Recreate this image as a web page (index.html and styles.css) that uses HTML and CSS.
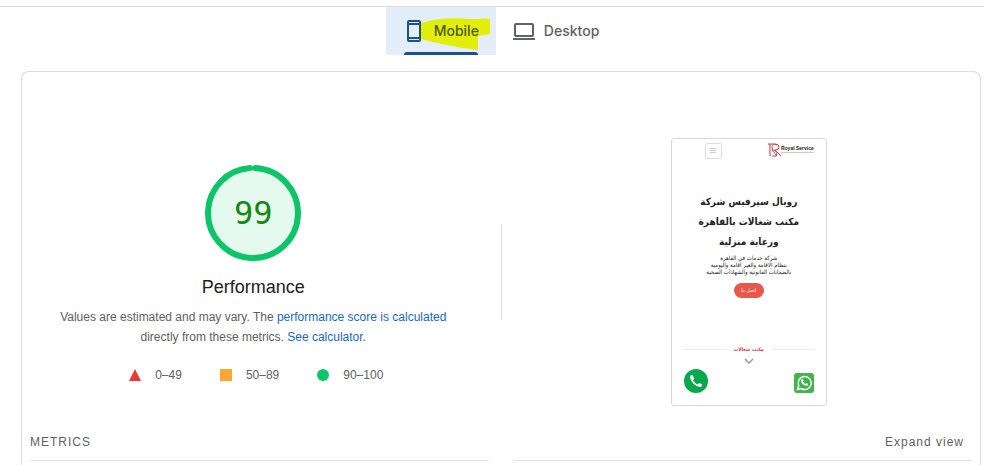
FILE: index.html
```html
<!DOCTYPE html>
<html lang="en">
<head>
    <meta charset="UTF-8">
    <meta name="viewport" content="width=device-width, initial-scale=1.0">
    <title>PageSpeed Insights</title>
    <link rel="stylesheet" href="styles.css">
</head>
<body>
    <nav class="tabs">
        <button type="button" class="tab active">
            <svg class="marker" viewBox="0 0 70 34" aria-hidden="true">
                <path d="M0 6 L12 3 Q30 0 48 2 L56 2 Q64 1 69 2 L69 17 L57 19 L57 33 Q40 31 26 28 L12 25 L0 22 Z" fill="#e3ee08"/>
            </svg>
            <svg class="tab-icon" viewBox="0 0 22 22" fill="none" stroke="#1c4f93" stroke-width="2" aria-hidden="true">
                <rect x="5" y="1" width="12" height="20" rx="1"/>
                <path d="M5 4h12M5 18h12"/>
            </svg>
            <span class="tab-label">Mobile</span>
        </button>
        <button type="button" class="tab">
            <svg class="tab-icon" viewBox="0 0 22 22" fill="none" stroke="#5f6368" stroke-width="2" aria-hidden="true">
                <rect x="2" y="4" width="18" height="12" rx="1"/>
                <path d="M0 19h22"/>
            </svg>
            <span class="tab-label">Desktop</span>
        </button>
    </nav>

    <main class="report">
        <section class="overview">
            <div class="score">
                <div class="gauge">
                    <svg viewBox="0 0 96 96" aria-hidden="true">
                        <circle cx="48" cy="48" r="45" fill="#e5faef"/>
                        <circle cx="48" cy="48" r="45" fill="none" stroke="#0cc568" stroke-width="6" stroke-linecap="round" pathLength="100" stroke-dasharray="98 2" transform="rotate(-87 48 48)"/>
                    </svg>
                    <span class="gauge-value">99</span>
                </div>
                <h1>Performance</h1>
                <p class="description">Values are estimated and may vary. The <a href="#">performance score is calculated</a> directly from these metrics. <a href="#">See calculator.</a></p>
                <div class="legend">
                    <span class="range"><svg viewBox="0 0 12 12" aria-hidden="true"><path d="M6 0l6 12H0z" fill="#e93b36"/></svg>0–49</span>
                    <span class="range"><svg viewBox="0 0 12 12" aria-hidden="true"><path d="M0 0h12v12H0z" fill="#fba733"/></svg>50–89</span>
                    <span class="range"><svg viewBox="0 0 12 12" aria-hidden="true"><circle cx="6" cy="6" r="6" fill="#0cc568"/></svg>90–100</span>
                </div>
            </div>

            <div class="separator"></div>

            <div class="phone" lang="ar" dir="rtl">
                <div class="phone-header">
                    <div class="logo" dir="ltr">
                        <svg viewBox="0 0 13 14" fill="none" aria-hidden="true">
                            <path d="M2 1v12M0 1h7q4 0 4 3t-4 3L13 13" stroke="#c7363b" stroke-width="1"/>
                            <path d="M9 2Q4 0 4 4t3 4 1 5H4M4 7l5 6" stroke="#a8595d" stroke-width="1"/>
                        </svg>
                        <span class="logo-name">Royal Service</span>
                    </div>
                    <button type="button" class="menu" aria-label="القائمة">
                        <svg viewBox="0 0 6 6" stroke="#ccc" stroke-width="1" aria-hidden="true"><path d="M0 .5h6M0 2.500h6M0 4.500h6"/></svg>
                    </button>
                </div>
                <h2>رويال سيرفيس شركة<br>مكتب شغالات بالقاهرة<br>ورعاية منزلية</h2>
                <p class="intro">شركة خدمات في القاهرة<br>بنظام الاقامة والغير اقامة واليومية<br>بالضمانات القانونية والشهادات الصحية</p>
                <a class="call" href="#">اتصل بنا</a>
                <h3>مكتب شغالات</h3>
                <svg class="chevron" viewBox="0 0 10 6" fill="none" stroke="#999" stroke-width="1.5" aria-hidden="true"><path d="M1 1l4 4 4-4"/></svg>
                <div class="contacts">
                    <svg viewBox="0 0 24 24" aria-hidden="true">
                        <g transform="translate(2 0)">
                            <rect x="2" y="4" width="20" height="20" rx="3" fill="#43b34c"/>
                            <path d="M5.500 20.500l1.200-4A6.500 6.500 0 1 1 9.200 19.500z" fill="none" stroke="#fff" stroke-width="1.500"/>
                            <path d="M9.500 10.300q.8-1 1.400-.2l.7 1.500-.7 1q1 1.800 2.600 2.300l.9-.9 1.700.9q.2 1.600-1.700 1.900-2 .1-4-2t-.9-4.500z" fill="#fff"/>
                        </g>
                    </svg>
                    <svg viewBox="0 0 24 24" aria-hidden="true">
                        <circle cx="12" cy="12" r="12" fill="#06a84c"/>
                        <path d="M8.500 6L6.300 6.600Q5.500 10.500 9.300 14.600T17.300 18l.8-2.700-3-1.400-1.600 1.500Q10.600 14 9 11.200l1.300-1.800z" fill="#fff"/>
                    </svg>
                </div>
            </div>
        </section>

        <section class="metrics">
            <div class="metrics-header">
                <h2>METRICS</h2>
                <button type="button" class="expand">Expand view</button>
            </div>
            <div class="metrics-columns">
                <div class="metric"></div>
                <div class="metric"></div>
            </div>
        </section>
    </main>
</body>
</html>
```

FILE: styles.css
```css
body {
    font-family: "Liberation Sans", Arial, sans-serif;
    font-size: 12px;
    line-height: 20px;
    margin: 0;
    padding: 6px 0 0;
    min-height: 100vh;
    box-sizing: border-box;
    display: flex;
    flex-direction: column;
    background-color: #fff;
    color: #5f6062;
}

h1, h2, h3, p {
    margin: 0;
    font-weight: normal;
}

button {
    font: inherit;
    color: inherit;
    letter-spacing: inherit;
    border: none;
    background: none;
    padding: 0;
    cursor: pointer;
}

a {
    color: #1967c0;
    text-decoration: none;
}

/* Tabs */
.tabs {
    display: flex;
    justify-content: center;
    padding-left: 18px;
    border-top: 1px solid #dadce0;
}

.tab {
    position: relative;
    display: flex;
    align-items: center;
    gap: 9px;
    height: 48px;
    padding: 0 17px;
    font-family: Inter, sans-serif;
    font-size: 14px;
    font-weight: 500;
}

.tab.active {
    background-color: #e3eefa;
}

.tab.active .tab-label {
    color: #4c5a1c;
}

.tab.active::after {
    content: "";
    position: absolute;
    left: 18px;
    right: 18px;
    bottom: 0;
    height: 3px;
    border-radius: 3px 3px 0 0;
    background-color: #1c4f93;
}

.tab-icon {
    width: 22px;
    height: 22px;
}

.tab-label {
    position: relative;
}

.marker {
    position: absolute;
    left: 35px;
    top: 10px;
    width: 70px;
    height: 34px;
}

/* Report */
.report {
    flex: 1;
    margin: 16px 3px 0 21px;
    padding: 0 8px;
    border: 1px solid #dadce0;
    border-bottom: none;
    border-radius: 8px 8px 0 0;
}

.overview {
    display: grid;
    grid-template-columns: 1fr 1px 1fr;
    column-gap: 24px;
    align-items: center;
    justify-items: center;
    padding: 66px 0 24px;
}

.score {
    text-align: center;
}

.gauge {
    display: grid;
    place-items: center;
    margin: 6px 0 14px;
}

.gauge svg,
.gauge-value {
    grid-area: 1 / 1;
}

.gauge svg {
    width: 96px;
    height: 96px;
}

.gauge-value {
    font-family: "DejaVu Sans Mono", monospace;
    font-size: 32px;
    line-height: 32px;
    color: #118811;
}

.score h1 {
    font-size: 18px;
    line-height: 24px;
    color: #212121;
}

.description {
    max-width: 400px;
    margin-top: 8px;
}

.legend {
    display: flex;
    justify-content: center;
    gap: 38px;
    margin-top: 18px;
    padding-left: 6px;
}

.range {
    display: flex;
    align-items: center;
    gap: 14px;
}

.range svg {
    width: 12px;
    height: 12px;
}

.separator {
    width: 1px;
    height: 96px;
    background-color: #dadce0;
}

/* Phone preview */
.phone {
    display: flex;
    flex-direction: column;
    align-items: center;
    box-sizing: border-box;
    width: 156px;
    padding: 4px 12px 12px;
    border: 1px solid #d8d8d8;
    border-radius: 3px;
    font-family: "DejaVu Sans Condensed", "DejaVu Sans", sans-serif;
    color: #222;
}

.phone-header {
    align-self: stretch;
    display: flex;
    justify-content: space-between;
    padding-left: 21px;
}

.logo {
    display: flex;
}

.logo svg {
    width: 13px;
    height: 14px;
}

.logo-name {
    height: 9px;
    border-bottom: 1px solid #ccc;
    font-family: "Liberation Sans", Arial, sans-serif;
    font-size: 5px;
    font-weight: bold;
    line-height: 10px;
}

.menu {
    display: grid;
    place-items: center;
    box-sizing: border-box;
    width: 17px;
    height: 16px;
    border: 1px solid #ddd;
    border-radius: 2px;
}

.menu svg {
    width: 6px;
    height: 6px;
}

.phone h2 {
    margin-top: 33px;
    font-size: 10px;
    font-weight: bold;
    line-height: 20px;
    text-align: center;
    white-space: nowrap;
}

.intro {
    margin-top: 2px;
    font-size: 6px;
    line-height: 7px;
    text-align: center;
    white-space: nowrap;
}

.call {
    margin-top: 8px;
    width: 30px;
    border-radius: 8px;
    background-color: #e9574a;
    color: #fff;
    font-size: 5px;
    line-height: 15px;
    text-align: center;
}

.phone h3 {
    align-self: stretch;
    display: flex;
    align-items: center;
    gap: 8px;
    margin-top: 46px;
    font-size: 5px;
    font-weight: bold;
    line-height: 10px;
    color: #d3343c;
}

.phone h3::before,
.phone h3::after {
    content: "";
    flex: 1;
    height: 1px;
    background-color: #eee;
}

.chevron {
    width: 10px;
    height: 6px;
    margin-top: 4px;
}

.contacts {
    align-self: stretch;
    display: flex;
    justify-content: space-between;
    margin-top: 5px;
}

.contacts svg {
    width: 24px;
    height: 24px;
    overflow: visible;
}

/* Metrics */
.metrics-header {
    display: flex;
    justify-content: space-between;
    padding: 2px 8px 8px 0;
    letter-spacing: 1px;
}

.metrics-header h2 {
    font-size: 12px;
}

.metrics-columns {
    display: grid;
    grid-template-columns: 1fr 1fr;
    column-gap: 24px;
}

.metric {
    border-top: 1px solid #e4e4e4;
}
```
